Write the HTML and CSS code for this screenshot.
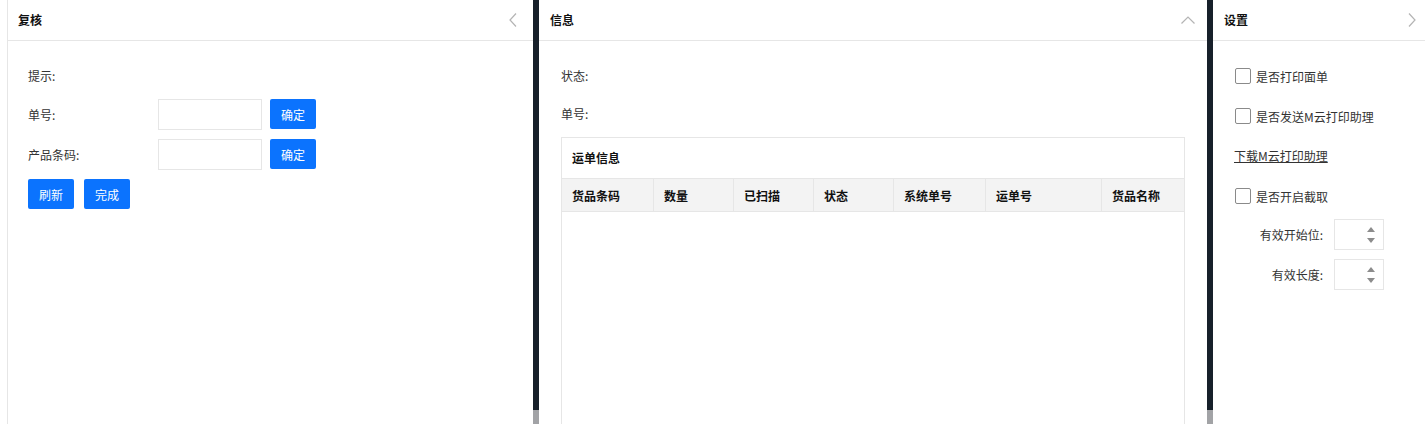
FILE: index.html
```html
<!DOCTYPE html>
<html lang="zh-CN">
<head>
    <meta charset="UTF-8">
    <meta name="viewport" content="width=device-width, initial-scale=1.0">
    <title>复核</title>
    <link rel="stylesheet" href="styles.css">
</head>
<body>
    <div class="layout">
        <!-- 复核 -->
        <section class="panel panel-review">
            <div class="panel-head">
                <span class="panel-title">复核</span>
                <svg class="chevron chevron-side" viewBox="0 0 8 14"><polyline points="7,0.5 1,7 7,13.5"/></svg>
            </div>
            <div class="panel-body">
                <div class="line">提示:</div>
                <div class="form-row">
                    <label class="form-label">单号:</label>
                    <input class="text-input" type="text">
                    <button class="btn btn-confirm">确定</button>
                </div>
                <div class="form-row">
                    <label class="form-label">产品条码:</label>
                    <input class="text-input" type="text">
                    <button class="btn btn-confirm">确定</button>
                </div>
                <div class="btn-row">
                    <button class="btn">刷新</button>
                    <button class="btn">完成</button>
                </div>
            </div>
        </section>

        <div class="splitter"><div class="splitter-thumb"></div></div>

        <!-- 信息 -->
        <section class="panel panel-info">
            <div class="panel-head">
                <span class="panel-title">信息</span>
                <svg class="chevron chevron-up" viewBox="0 0 14 8"><polyline points="0.5,7.5 7,1 13.5,7.5"/></svg>
            </div>
            <div class="panel-body">
                <div class="line">状态:</div>
                <div class="line">单号:</div>
                <div class="waybill">
                    <div class="waybill-title">运单信息</div>
                    <table class="waybill-table">
                        <colgroup>
                            <col style="width: 91px">
                            <col style="width: 80px">
                            <col style="width: 80px">
                            <col style="width: 80px">
                            <col style="width: 92px">
                            <col style="width: 116px">
                            <col>
                        </colgroup>
                        <thead>
                            <tr>
                                <th>货品条码</th>
                                <th>数量</th>
                                <th>已扫描</th>
                                <th>状态</th>
                                <th>系统单号</th>
                                <th>运单号</th>
                                <th>货品名称</th>
                            </tr>
                        </thead>
                        <tbody></tbody>
                    </table>
                </div>
            </div>
        </section>

        <div class="splitter"><div class="splitter-thumb"></div></div>

        <!-- 设置 -->
        <section class="panel panel-settings">
            <div class="panel-head">
                <span class="panel-title">设置</span>
                <svg class="chevron chevron-side" viewBox="0 0 8 14"><polyline points="1,0.5 7,7 1,13.5"/></svg>
            </div>
            <div class="panel-body">
                <label class="check-row"><input type="checkbox" class="checkbox">是否打印面单</label>
                <label class="check-row"><input type="checkbox" class="checkbox">是否发送M云打印助理</label>
                <div class="link-row"><a href="#">下载M云打印助理</a></div>
                <label class="check-row check-last"><input type="checkbox" class="checkbox">是否开启截取</label>
                <div class="num-row">
                    <span class="num-label">有效开始位:</span>
                    <div class="num-box">
                        <div class="spinner"><span class="arrow-up"></span><span class="arrow-down"></span></div>
                    </div>
                </div>
                <div class="num-row">
                    <span class="num-label">有效长度:</span>
                    <div class="num-box">
                        <div class="spinner"><span class="arrow-up"></span><span class="arrow-down"></span></div>
                    </div>
                </div>
            </div>
        </section>
    </div>
</body>
</html>
```

FILE: styles.css
```css
* {
    margin: 0;
    padding: 0;
    box-sizing: border-box;
}

body {
    font-family: "Noto Sans CJK SC", "Microsoft YaHei", sans-serif;
    font-size: 12px;
    color: #333;
    background-color: #fff;
    overflow: hidden;
}

.layout {
    display: flex;
    height: 424px;
    padding-left: 7px;
    overflow: hidden;
}

.panel {
    display: flex;
    flex-direction: column;
    background-color: #fff;
    overflow: hidden;
}

.panel-review {
    width: 526px;
    border-left: 1px solid #e6e6e6;
}

.panel-info {
    width: 668px;
}

.panel-settings {
    flex: 1;
}

.splitter {
    width: 6px;
    flex-shrink: 0;
    display: flex;
    flex-direction: column;
    justify-content: flex-end;
    background-color: #17202a;
}

.splitter-thumb {
    height: 14px;
    background-color: #a2a3a6;
}

/* header */
.panel-head {
    height: 41px;
    flex-shrink: 0;
    display: flex;
    align-items: center;
    justify-content: space-between;
    padding: 0 16px 1px 10px;
    border-bottom: 1px solid #e6e6e6;
}

.panel-info .panel-head {
    padding: 0 12px 1px 11px;
}

.panel-settings .panel-head {
    padding: 0 9px 1px 11px;
}

.panel-title {
    font-weight: bold;
    color: #111;
}

.chevron {
    fill: none;
    stroke: #b4b4b4;
    stroke-width: 1.2;
}

.chevron-side {
    width: 8px;
    height: 14px;
}

.chevron-up {
    width: 14px;
    height: 8px;
    margin-top: 1px;
}

/* body */
.panel-body {
    flex: 1;
    display: flex;
    flex-direction: column;
    padding: 20px 22px 0;
}

.panel-review .panel-body {
    padding-left: 20px;
}

.line {
    height: 30px;
    line-height: 30px;
    margin-bottom: 8px;
}

.form-row {
    display: flex;
    align-items: flex-start;
    height: 31px;
    margin-bottom: 9px;
}

.form-label {
    width: 130px;
    line-height: 31px;
}

.text-input {
    width: 104px;
    height: 31px;
    border: 1px solid #e6e6e6;
    outline: none;
    font: inherit;
    padding: 0 6px;
}

.btn {
    width: 46px;
    height: 30px;
    border: none;
    border-radius: 2px;
    background-color: #0b73fe;
    color: #fff;
    font-family: inherit;
    font-size: 12px;
    cursor: pointer;
}

.btn-confirm {
    margin-left: 8px;
}

.btn-row {
    display: flex;
    gap: 10px;
}

/* waybill table */
.waybill {
    height: 320px;
    flex-shrink: 0;
    border: 1px solid #e6e6e6;
}

.waybill-title {
    height: 41px;
    line-height: 40px;
    padding-left: 10px;
    font-weight: bold;
    color: #111;
    border-bottom: 1px solid #e6e6e6;
}

.waybill-table {
    width: 100%;
    table-layout: fixed;
    border-collapse: separate;
    border-spacing: 0;
}

.waybill-table th {
    height: 33px;
    padding: 0 10px;
    text-align: left;
    font-weight: bold;
    color: #111;
    background-color: #f3f3f3;
    border-bottom: 1px solid #e6e6e6;
    white-space: nowrap;
}

.waybill-table th + th {
    border-left: 1px solid #e6e6e6;
}

/* settings */
.check-row {
    display: flex;
    align-items: center;
    height: 30px;
    margin-bottom: 10px;
    cursor: pointer;
}

.check-row.check-last {
    margin-bottom: 8px;
}

.checkbox {
    appearance: none;
    -webkit-appearance: none;
    width: 16px;
    height: 16px;
    margin-right: 5px;
    border: 1px solid #8a8a8a;
    border-radius: 2px;
    background-color: #fff;
}

.link-row {
    height: 30px;
    line-height: 30px;
    margin-bottom: 10px;
    margin-left: -1px;
}

.link-row a {
    color: #333;
    text-decoration: underline;
}

.num-row {
    display: flex;
    align-items: center;
    height: 31px;
    margin-bottom: 9px;
}

.num-label {
    width: 88px;
    margin-right: 11px;
    text-align: right;
}

.num-box {
    width: 50px;
    height: 31px;
    display: flex;
    justify-content: flex-end;
    align-items: flex-start;
    padding: 7px 8px 0 0;
    border: 1px solid #e6e6e6;
}

.spinner {
    display: flex;
    flex-direction: column;
    gap: 6px;
}

.arrow-up,
.arrow-down {
    width: 0;
    height: 0;
    border-left: 4px solid transparent;
    border-right: 4px solid transparent;
}

.arrow-up {
    border-bottom: 5px solid #8c8c8c;
}

.arrow-down {
    border-top: 5px solid #8c8c8c;
}
```
